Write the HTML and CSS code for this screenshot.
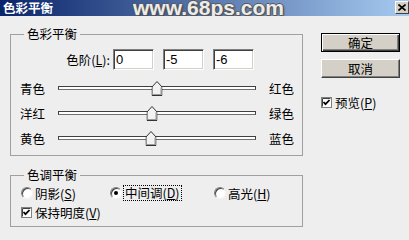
FILE: index.html
```html
<!DOCTYPE html>
<html lang="zh-CN">

<head>
    <meta charset="UTF-8">
    <title>色彩平衡</title>
    <link rel="stylesheet" href="styles.css">
</head>

<body>
    <div class="dialog">
        <div class="titlebar">
            <span class="title">色彩平衡</span>
            <span class="watermark">www.68ps.com</span>
            <span class="close">
                <svg width="8" height="7" viewBox="0 0 8 7">
                    <path d="M0.5 0.5 L7.5 6.5 M7.5 0.5 L0.5 6.5" stroke="#000" stroke-width="1.6" fill="none"/>
                </svg>
            </span>
        </div>

        <div class="content">
            <div class="main">
                <fieldset class="group balance">
                    <legend>色彩平衡</legend>
                    <div class="levels">
                        <label class="levels-label">色阶(<u>L</u>):</label>
                        <input class="field" value="0">
                        <input class="field" value="-5">
                        <input class="field" value="-6">
                    </div>

                    <div class="sliders">
                        <div class="slider-row">
                            <span class="slider-label">青色</span>
                            <div class="track">
                                <svg class="thumb" style="left: calc(50% + 0px);" width="11" height="15" viewBox="0 0 11 15">
                                    <polygon points="0.5,6 5.5,0.5 10.5,6 10.5,14.5 0.5,14.5" fill="#f2f2f2" stroke="#333"/>
                                    <path d="M9.5 6.5 V13.5 H1.5" stroke="#9a9a9a" fill="none"/>
                                </svg>
                            </div>
                            <span class="slider-right">红色</span>
                        </div>
                        <div class="slider-row">
                            <span class="slider-label">洋红</span>
                            <div class="track">
                                <svg class="thumb" style="left: calc(50% - 5px);" width="11" height="15" viewBox="0 0 11 15">
                                    <polygon points="0.5,6 5.5,0.5 10.5,6 10.5,14.5 0.5,14.5" fill="#f2f2f2" stroke="#333"/>
                                    <path d="M9.5 6.5 V13.5 H1.5" stroke="#9a9a9a" fill="none"/>
                                </svg>
                            </div>
                            <span class="slider-right">绿色</span>
                        </div>
                        <div class="slider-row">
                            <span class="slider-label">黄色</span>
                            <div class="track">
                                <svg class="thumb" style="left: calc(50% - 6px);" width="11" height="15" viewBox="0 0 11 15">
                                    <polygon points="0.5,6 5.5,0.5 10.5,6 10.5,14.5 0.5,14.5" fill="#f2f2f2" stroke="#333"/>
                                    <path d="M9.5 6.5 V13.5 H1.5" stroke="#9a9a9a" fill="none"/>
                                </svg>
                            </div>
                            <span class="slider-right">蓝色</span>
                        </div>
                    </div>
                </fieldset>

                <fieldset class="group tone">
                    <legend>色调平衡</legend>
                    <div class="radios">
                        <label class="radio-item first"><span class="radio"></span>阴影(<u>S</u>)</label>
                        <label class="radio-item mid"><span class="radio on"></span><span class="focus">中间调(<u>D</u>)</span></label>
                        <label class="radio-item"><span class="radio"></span>高光(<u>H</u>)</label>
                    </div>
                    <label class="check keep">
                        <svg class="box" width="11" height="11" viewBox="0 0 11 11">
                            <rect x="0.5" y="0.5" width="10" height="10" fill="#fff" stroke="#808080"/>
                            <path d="M1.5 9.5 V1.5 H9.5" stroke="#404040" fill="none"/>
                            <path d="M2.5 5 L4.5 7.2 L8.5 3" stroke="#000" stroke-width="1.8" fill="none"/>
                        </svg>
                        保持明度(<u>V</u>)
                    </label>
                </fieldset>
            </div>

            <div class="side">
                <button class="btn default">确定</button>
                <button class="btn">取消</button>
                <label class="check preview">
                    <svg class="box" width="11" height="11" viewBox="0 0 11 11">
                        <rect x="0.5" y="0.5" width="10" height="10" fill="#fff" stroke="#808080"/>
                        <path d="M1.5 9.5 V1.5 H9.5" stroke="#404040" fill="none"/>
                        <path d="M2.5 5 L4.5 7.2 L8.5 3" stroke="#000" stroke-width="1.8" fill="none"/>
                    </svg>
                    预览(<u>P</u>)
                </label>
            </div>
        </div>
    </div>
</body>

</html>
```

FILE: styles.css
```css
* {
    box-sizing: border-box;
}

body {
    margin: 0;
    background: #eeeeee;
    color: #000;
    font-family: "Noto Sans CJK SC", "Liberation Sans", sans-serif;
    font-size: 12.5px;
}

.dialog {
    width: 409px;
    height: 240px;
    overflow: hidden;
    background: #eeeeee;
}

/* title bar */
.titlebar {
    height: 16px;
    display: flex;
    align-items: flex-start;
    background: linear-gradient(to right, #0a246a, #a6caf0);
    overflow: hidden;
}

.title {
    color: #fff;
    font-weight: bold;
    font-size: 12.5px;
    padding-left: 3px;
    line-height: 16px;
    white-space: nowrap;
}

.watermark {
    margin-left: 80px;
    font: bold 21px "Liberation Sans", sans-serif;
    line-height: 16px;
    color: #ececec;
    white-space: nowrap;
    text-shadow: -1px 0 #5a5a5a, 1px 0 #5a5a5a, 0 -1px #5a5a5a, 0 1px #5a5a5a, 1px 1px 2px #333;
}

.close {
    margin-left: auto;
    margin-top: 1px;
    width: 14px;
    height: 13px;
    display: flex;
    align-items: center;
    justify-content: center;
    background: #d4d0c8;
    border: 1px solid;
    border-color: #fff #404040 #404040 #fff;
}

/* body */
.content {
    display: flex;
}

.main {
    margin-left: 10px;
    width: 293px;
    flex: none;
}

.group {
    margin: 0;
    border: 1px solid #a0a0a0;
    padding: 0 8px 7px 9px;
}

.group legend {
    padding: 0 3px;
    margin-left: 4px;
    line-height: 14px;
}

.balance {
    margin-top: 11px;
}

.levels {
    display: flex;
    align-items: center;
    margin-top: 8px;
}

.levels-label {
    width: 90px;
    text-align: right;
    margin-right: 3px;
    white-space: nowrap;
}

.field {
    width: 41px;
    height: 21px;
    margin: 0 9px 0 0;
    padding: 0 2px;
    font: 13px "Liberation Sans", sans-serif;
    background: #fff;
    border: 1px solid;
    border-color: #808080 #fff #fff #808080;
    box-shadow: inset 1px 1px 0 #404040, inset -1px -1px 0 #d4d0c8;
    outline: none;
}

.sliders {
    display: flex;
    flex-direction: column;
    gap: 5px;
    margin-top: 8px;
}

.slider-row {
    display: flex;
    align-items: center;
    height: 20px;
    white-space: nowrap;
}

.slider-label {
    width: 38px;
    flex: none;
}

.track {
    position: relative;
    width: 198px;
    height: 4px;
    flex: none;
    background: #fff;
    border: 1px solid #404040;
    border-bottom-color: #707070;
}

.thumb {
    position: absolute;
    top: -6px;
    transform: translateX(-50%);
    display: block;
}

.slider-right {
    margin-left: 13px;
    flex: none;
}

.tone {
    margin-top: 12px;
}

.radios {
    display: flex;
    align-items: center;
    height: 14px;
    margin-top: 4px;
    white-space: nowrap;
}

.radio-item {
    display: flex;
    align-items: center;
}

.radio-item.first {
    width: 89px;
    margin-left: 1px;
}

.radio-item.mid {
    width: 104px;
}

.radio {
    width: 12px;
    height: 12px;
    margin-right: 2px;
    border-radius: 50%;
    background: #fff;
    border: 1px solid;
    border-color: #808080 #f4f4f4 #f4f4f4 #808080;
    box-shadow: inset 1px 1px 0 #404040;
    display: flex;
    align-items: center;
    justify-content: center;
    flex: none;
}

.radio.on::after {
    content: "";
    width: 4px;
    height: 4px;
    border-radius: 50%;
    background: #000;
}

.focus {
    outline: 1px dotted #000;
    padding: 0 1px;
    line-height: 14px;
}

.check {
    display: flex;
    align-items: center;
    height: 14px;
    white-space: nowrap;
}

.check .box {
    margin-right: 3px;
    flex: none;
}

.keep {
    margin-top: 5px;
    margin-left: 1px;
}

/* right column */
.side {
    margin-left: 18px;
    padding-top: 17px;
    display: flex;
    flex-direction: column;
    width: 79px;
    flex: none;
}

.btn {
    width: 79px;
    height: 19px;
    margin-bottom: 7px;
    padding: 0;
    font-family: "Noto Sans CJK SC", sans-serif;
    font-size: 12.5px;
    line-height: 15px;
    background: #d4d0c8;
    border: 1px solid;
    border-color: #fff #404040 #404040 #fff;
    box-shadow: inset -1px -1px 0 #808080;
}

.btn.default {
    border-color: #000;
    box-shadow: inset 1px 1px 0 #fff, inset -1px -1px 0 #404040, inset -2px -2px 0 #808080;
}

.preview {
    margin-top: 10px;
}
```
